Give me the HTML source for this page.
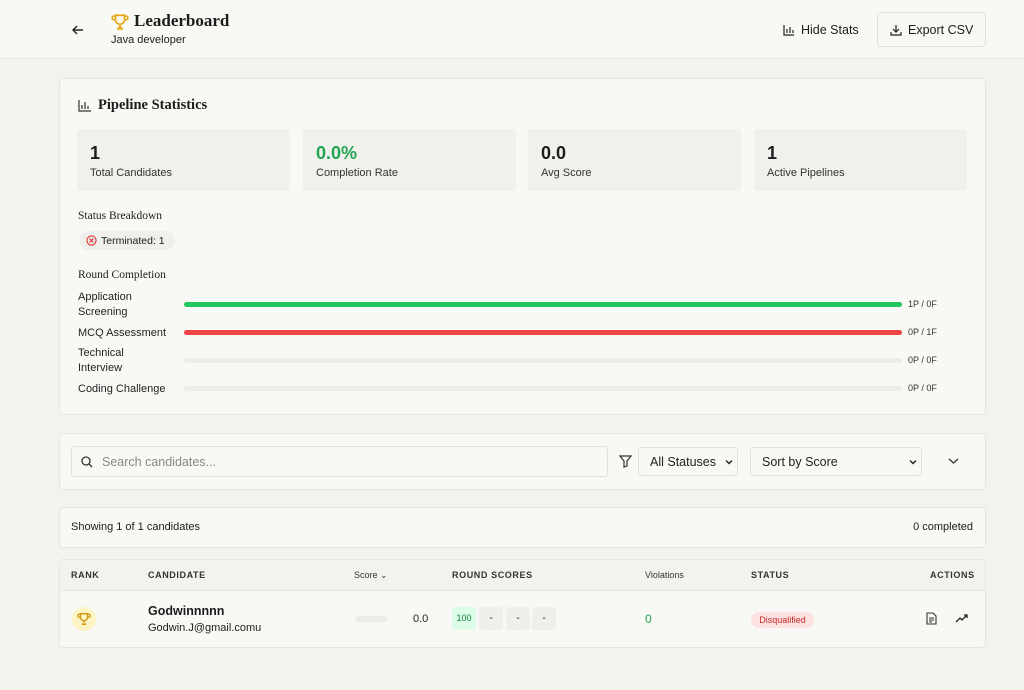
<!DOCTYPE html><html><head><style>
*{box-sizing:border-box;margin:0;padding:0}
body{width:1024px;height:690px;background:#f2f2ef;font-family:"Liberation Sans",sans-serif;color:#1c1c1c;position:relative;overflow:hidden}
.abs{position:absolute}
.card{position:absolute;left:59px;width:927px;background:#f8f8f5;border:1px solid #e6e6e1;border-radius:4px}
.stat{position:absolute;top:129px;height:62px;width:213px;background:#f0f0ec;border-radius:3px}
.stat b{position:absolute;left:13px;top:14px;font-size:18px}
.stat span{position:absolute;left:13px;top:38px;font-size:11px;color:#333}
.lbl{position:absolute;left:78px;font-size:11px;line-height:15px;color:#222}
.bar{position:absolute;left:184px;width:718px;height:5px;border-radius:3px;background:#ececE8}
.rv{position:absolute;left:908px;font-size:9px;color:#333}
.th{position:absolute;top:570px;font-size:9px;font-weight:bold;letter-spacing:.6px;color:#333}
.sel{position:absolute;top:447px;height:29px;background:#f8f8f5;border:1px solid #e2e2dd;border-radius:3px;font-size:12.5px;padding:7px 11px;color:#222}
.sc{position:absolute;top:607px;height:23px;width:24px;background:#efefeb;border-radius:3px;font-size:10px;text-align:center;line-height:23px}
</style></head><body>
<div class="abs" style="left:0;top:0;width:1024px;height:59px;background:#f8f8f5;border-bottom:1px solid #e6e6e1"></div>
<svg class="abs" style="left:71px;top:23px" width="14" height="14" viewBox="0 0 14 14" fill="none" stroke="#222" stroke-width="1.4"><path d="M12 7H2M6 3L2 7l4 4"/></svg>
<svg class="abs" style="left:111px;top:13px" width="18" height="18" viewBox="0 0 24 24" fill="none" stroke="#e8a815" stroke-width="2.2"><path d="M6 9H4a2 2 0 010-5h2M18 9h2a2 2 0 000-5h-2M6 3h12v6a6 6 0 01-12 0zM12 15v4M8 21h8M10 19h4"/></svg>
<div class="abs" style="left:134px;top:11px;font-family:'Liberation Serif',serif;font-weight:bold;font-size:17px">Leaderboard</div>
<div class="abs" style="left:111px;top:34px;font-size:11px">Java developer</div>
<svg class="abs" style="left:783px;top:24px" width="12" height="12" viewBox="0 0 12 12" fill="none" stroke="#222" stroke-width="1.2"><path d="M1 1v10h10M4 9V5M7 9V3M10 9V6"/></svg>
<div class="abs" style="left:801px;top:23px;font-size:12.5px">Hide Stats</div>
<div class="abs" style="left:877px;top:12px;width:109px;height:35px;border:1px solid #e0e0db;border-radius:4px;background:#f8f8f5"></div>
<svg class="abs" style="left:890px;top:24px" width="12" height="12" viewBox="0 0 12 12" fill="none" stroke="#222" stroke-width="1.2"><path d="M1 8v3h10V8M6 1v7M3 5l3 3 3-3"/></svg>
<div class="abs" style="left:908px;top:23px;font-size:12.5px">Export CSV</div>

<div class="card" style="top:78px;height:337px"></div>
<svg class="abs" style="left:78px;top:100px" width="13" height="12" viewBox="0 0 13 12" fill="none" stroke="#333" stroke-width="1.2"><path d="M1 0v11h12M4 9V5M7 9V2M10 9V6"/></svg>
<div class="abs" style="left:98px;top:97px;font-family:'Liberation Serif',serif;font-weight:bold;font-size:14.5px">Pipeline Statistics</div>
<div class="stat" style="left:77px"><b>1</b><span>Total Candidates</span></div>
<div class="stat" style="left:303px"><b style="color:#22a552">0.0%</b><span>Completion Rate</span></div>
<div class="stat" style="left:528px"><b>0.0</b><span>Avg Score</span></div>
<div class="stat" style="left:754px"><b>1</b><span>Active Pipelines</span></div>
<div class="abs" style="left:78px;top:210px;font-family:'Liberation Serif',serif;font-size:11.5px">Status Breakdown</div>
<div class="abs" style="left:79px;top:231px;width:96px;height:19px;background:#efefeb;border-radius:10px;font-size:10.5px;padding:4px 0 0 22px">Terminated: 1</div>
<svg class="abs" style="left:86px;top:235px" width="11" height="11" viewBox="0 0 12 12" fill="none" stroke="#d33" stroke-width="1.2"><circle cx="6" cy="6" r="5"/><path d="M4 4l4 4M8 4L4 8"/></svg>
<div class="abs" style="left:78px;top:269px;font-family:'Liberation Serif',serif;font-size:11.5px">Round Completion</div>
<div class="lbl" style="top:290px">Application<br>Screening</div>
<div class="bar" style="top:302px;background:#22c55e"></div><div class="rv" style="top:299px">1P / 0F</div>
<div class="lbl" style="top:326px">MCQ Assessment</div>
<div class="bar" style="top:330px;background:#ef4444"></div><div class="rv" style="top:327px">0P / 1F</div>
<div class="lbl" style="top:346px">Technical<br>Interview</div>
<div class="bar" style="top:358px"></div><div class="rv" style="top:355px">0P / 0F</div>
<div class="lbl" style="top:382px">Coding Challenge</div>
<div class="bar" style="top:386px"></div><div class="rv" style="top:383px">0P / 0F</div>

<div class="card" style="top:433px;height:57px"></div>
<div class="abs" style="left:71px;top:446px;width:537px;height:31px;border:1px solid #e2e2dd;border-radius:3px;background:#f8f8f5"></div>
<svg class="abs" style="left:81px;top:456px" width="12" height="12" viewBox="0 0 12 12" fill="none" stroke="#333" stroke-width="1.3"><circle cx="5" cy="5" r="4"/><path d="M8 8l3 3"/></svg>
<div class="abs" style="left:102px;top:455px;font-size:12.5px;color:#888">Search candidates...</div>
<svg class="abs" style="left:619px;top:455px" width="13" height="13" viewBox="0 0 13 13" fill="none" stroke="#333" stroke-width="1.2"><path d="M1 1h11L8 6v5l-3 1V6z"/></svg>
<div class="sel" style="left:638px;width:100px">All Statuses</div>
<svg class="abs" style="left:725px;top:459px" width="8" height="6" viewBox="0 0 8 6" fill="none" stroke="#222" stroke-width="1.4"><path d="M1 1.5l3 3 3-3"/></svg>
<div class="sel" style="left:750px;width:172px">Sort by Score</div>
<svg class="abs" style="left:909px;top:459px" width="8" height="6" viewBox="0 0 8 6" fill="none" stroke="#222" stroke-width="1.4"><path d="M1 1.5l3 3 3-3"/></svg>
<svg class="abs" style="left:948px;top:457px" width="11" height="8" viewBox="0 0 11 8" fill="none" stroke="#333" stroke-width="1.3"><path d="M1 2l4.5 4L10 2"/></svg>

<div class="card" style="top:507px;height:41px"></div>
<div class="abs" style="left:71px;top:521px;font-size:11px">Showing 1 of 1 candidates</div>
<div class="abs" style="right:51px;top:521px;font-size:11px">0 completed</div>

<div class="card" style="top:559px;height:89px"></div>
<div class="abs" style="left:60px;top:560px;width:925px;height:31px;background:#f2f2ef;border-bottom:1px solid #e6e6e1"></div>
<div class="th" style="left:71px">RANK</div><div class="th" style="left:148px">CANDIDATE</div>
<div class="th" style="left:354px;font-weight:normal;letter-spacing:0">Score &#8964;</div>
<div class="th" style="left:452px">ROUND SCORES</div>
<div class="th" style="left:645px;font-weight:normal;letter-spacing:0">Violations</div>
<div class="th" style="left:751px">STATUS</div><div class="th" style="left:930px">ACTIONS</div>
<div class="abs" style="left:72px;top:607px;width:24px;height:24px;border-radius:50%;background:#fdf3c4"></div>
<svg class="abs" style="left:77px;top:612px" width="14" height="14" viewBox="0 0 24 24" fill="none" stroke="#d49a12" stroke-width="2.4"><path d="M6 9H4a2 2 0 010-5h2M18 9h2a2 2 0 000-5h-2M6 3h12v6a6 6 0 01-12 0zM12 15v4M8 21h8"/></svg>
<div class="abs" style="left:148px;top:604px;font-size:12.5px;font-weight:bold">Godwinnnnn</div>
<div class="abs" style="left:148px;top:622px;font-size:11px">Godwin.J@gmail.comu</div>
<div class="abs" style="left:355px;top:616px;width:32px;height:6px;border-radius:3px;background:#ececE8"></div>
<div class="abs" style="left:413px;top:613px;font-size:11px">0.0</div>
<div class="sc" style="left:452px;background:#dcfce7;color:#15803d;font-size:9px">100</div>
<div class="sc" style="left:479px">-</div><div class="sc" style="left:506px">-</div><div class="sc" style="left:532px">-</div>
<div class="abs" style="left:645px;top:612px;font-size:12px;color:#22a552">0</div>
<div class="abs" style="left:751px;top:612px;width:63px;height:16px;border-radius:8px;background:#fde2e2;color:#c62828;font-size:9px;text-align:center;line-height:16px">Disqualified</div>
<svg class="abs" style="left:926px;top:612px" width="11" height="13" viewBox="0 0 11 13" fill="none" stroke="#333" stroke-width="1.1"><path d="M1 1h6l3 3v8H1zM3 6h5M3 8h5M3 10h3"/></svg>
<svg class="abs" style="left:955px;top:614px" width="13" height="9" viewBox="0 0 13 9" fill="none" stroke="#222" stroke-width="1.3"><path d="M1 8l4-4 2 2 5-5M9 1h3v3"/></svg>
</body></html>
